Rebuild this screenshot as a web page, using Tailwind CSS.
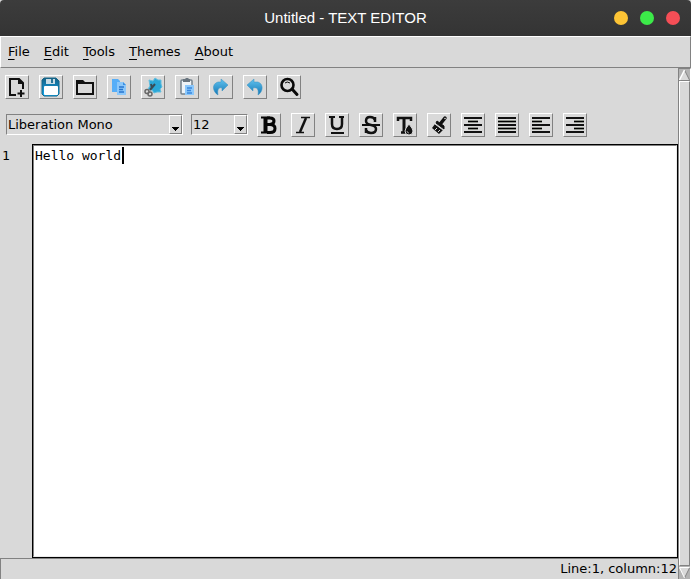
<!DOCTYPE html>
<html lang="en">
<head>
<meta charset="utf-8">
<title>Untitled - TEXT EDITOR</title>
<script src="https://cdn.jsdelivr.net/npm/@tailwindcss/browser@4"></script>
</head>
<body class="h-screen flex flex-col overflow-hidden bg-[#d9d9d9] text-black text-[13px] leading-4 font-['DejaVu_Sans',sans-serif]">
<header class="relative h-9 shrink-0 flex items-center justify-center rounded-t-sm bg-linear-to-b from-[#3c3c3c] to-[#343434]">
  <h1 class="text-white text-[15px] font-['Liberation_Sans',sans-serif]">Untitled - TEXT EDITOR</h1>
  <div class="absolute right-[11px] top-[11px] flex gap-3">
    <button aria-label="Minimize" class="size-3.5 rounded-full bg-[#fdc435]"></button>
    <button aria-label="Maximize" class="size-3.5 rounded-full bg-[#3cea49]"></button>
    <button aria-label="Close" class="size-3.5 rounded-full bg-[#f54e56]"></button>
  </div>
</header>
<nav class="h-8 shrink-0 flex items-center gap-3.5 px-[7px] border border-t-white border-l-white border-r-[#828282] border-b-[#828282]">
  <button><span class="underline underline-offset-3">F</span>ile</button>
  <button><span class="underline underline-offset-3">E</span>dit</button>
  <button><span class="underline underline-offset-3">T</span>ools</button>
  <button><span class="underline underline-offset-3">T</span>hemes</button>
  <button><span class="underline underline-offset-3">A</span>bout</button>
</nav>
<div class="flex-1 min-h-0 flex">
  <main class="flex-1 min-w-0 flex flex-col">
    <div class="flex gap-2.5 pl-[5px] pt-[7px] shrink-0">
      <button aria-label="New" class="size-6 border border-t-white border-l-white border-r-[#828282] border-b-[#828282]">
        <svg width="22" height="22" viewBox="0 0 22 22" fill="none" stroke="#111" stroke-width="2"><path d="M10 19H4V3h9l4 4v6"/><path d="M12 2l6 6h-6z" fill="#111" stroke="none"/><path d="M15 14v7M11.500 17.500h7"/></svg>
      </button>
      <button aria-label="Save" class="size-6 border border-t-white border-l-white border-r-[#828282] border-b-[#828282]">
        <svg width="22" height="22" viewBox="0 0 22 22"><defs><linearGradient id="disk" x2="0" y2="1"><stop stop-color="#166184"/><stop offset="1" stop-color="#11a9f3"/></linearGradient></defs><path d="M4 2h12l3 3v13l-2 2H4l-2-2V4z" fill="url(#disk)" stroke="#176789"/><path d="M6 3h9v5H6z" fill="#c9dce5"/><path d="M11 3h2v4h-2z" fill="#277497"/><rect x="4" y="10" width="14" height="9" rx="1" fill="#fff"/></svg>
      </button>
      <button aria-label="Open" class="size-6 border border-t-white border-l-white border-r-[#828282] border-b-[#828282]">
        <svg width="22" height="22" viewBox="0 0 22 22"><path d="M3 7h16v11H3z" fill="none" stroke="#111" stroke-width="2"/><path d="M2 4h7l2 2v2H2z" fill="#111"/></svg>
      </button>
      <button aria-label="Copy" class="size-6 border border-t-white border-l-white border-r-[#828282] border-b-[#828282]">
        <svg width="22" height="22" viewBox="0 0 22 22"><path d="M4 3h6l2 2v11H4z" fill="#56aef8"/><path d="M9 6h6l3 3v10H9z" fill="#8bc7fa"/><path d="M15 6v3h3z" fill="#3c91e4"/><path d="M11 11h5M11 13.500h4M11 16h5" stroke="#2876ce" stroke-width="1.300"/></svg>
      </button>
      <button aria-label="Cut" class="size-6 border border-t-white border-l-white border-r-[#828282] border-b-[#828282]">
        <svg width="22" height="22" viewBox="0 0 22 22"><path d="M7 4l4 1 2-3 3 2 3 0 0 4 1 3-2 2 1 3-4 0-3 1-2-3-4-1 2-3z" fill="#2ba7d7" stroke="#62bedf"/><path d="M9 8l1 4M13 8l-5 6" stroke="#394c56" stroke-width="2"/><g fill="none" stroke="#686868" stroke-width="1.500"><circle cx="5" cy="15.500" r="2"/><circle cx="8" cy="18" r="2"/></g></svg>
      </button>
      <button aria-label="Paste" class="size-6 border border-t-white border-l-white border-r-[#828282] border-b-[#828282]">
        <svg width="22" height="22" viewBox="0 0 22 22"><rect x="5" y="4" width="11" height="14" rx="1" fill="#eef3f7" stroke="#74818c" stroke-width="1.500"/><path d="M7 3h2l1-1h2l1 1h1v3H7z" fill="#68747e"/><path d="M9 9h9v10H9z" fill="#8bc8fc"/><path d="M11 12h5M11 14.500h4M11 17h5" stroke="#3a86dc" stroke-width="1.300"/></svg>
      </button>
      <button aria-label="Redo" class="size-6 border border-t-white border-l-white border-r-[#828282] border-b-[#828282]">
        <svg width="22" height="22" viewBox="0 0 22 22"><defs><linearGradient id="arrow" x2="0" y2="1"><stop stop-color="#62c3ef"/><stop offset="1" stop-color="#1377b5"/></linearGradient></defs><path d="M11 3l7 6-6 6v-3c-3-1-5 1-4 7-5-3-7-11 0-13 1 0 2 0 3 0z" fill="url(#arrow)" stroke="#3690c0" stroke-width=".5"/></svg>
      </button>
      <button aria-label="Undo" class="size-6 border border-t-white border-l-white border-r-[#828282] border-b-[#828282]">
        <svg width="22" height="22" viewBox="0 0 22 22"><path d="M10 3l-7 6 6 6v-3c4-1 6 1 5 7 5-3 6-11 0-13-1 0-3 0-4 0z" fill="url(#arrow)" stroke="#3690c0" stroke-width=".5"/></svg>
      </button>
      <button aria-label="Find" class="size-6 border border-t-white border-l-white border-r-[#828282] border-b-[#828282]">
        <svg width="22" height="22" viewBox="0 0 22 22" fill="none" stroke="#090909"><circle cx="9.500" cy="9" r="6" stroke-width="2.600"/><path d="M7 7q2-2 5 0" stroke-width="1"/><path d="M14 13l5 5.500" stroke-width="3" stroke-linecap="round"/></svg>
      </button>
    </div>
    <div class="flex items-start pl-1.5 pt-3.5 shrink-0">
      <div class="relative w-[177px] h-[21px] mt-px mr-2 border border-t-[#828282] border-l-[#828282] border-r-white border-b-white">
        <select aria-label="Font" class="appearance-none w-full h-[19px] pl-px block"><option>Liberation Mono</option></select>
        <span class="absolute right-0 top-0 w-[13px] h-[19px] border border-t-white border-l-white border-r-[#828282] border-b-[#828282] pointer-events-none"><svg width="11" height="17"><path d="M2 11h7v1H8v1H7v1H6v1H5v-1H4v-1H3v-1H2z"/></svg></span>
      </div>
      <div class="relative w-[57px] h-[21px] mt-px mr-[9px] border border-t-[#828282] border-l-[#828282] border-r-white border-b-white">
        <select aria-label="Font size" class="appearance-none w-full h-[19px] pl-px block"><option>12</option></select>
        <span class="absolute right-0 top-0 w-[13px] h-[19px] border border-t-white border-l-white border-r-[#828282] border-b-[#828282] pointer-events-none"><svg width="11" height="17"><path d="M2 11h7v1H8v1H7v1H6v1H5v-1H4v-1H3v-1H2z"/></svg></span>
      </div>
      <div class="flex gap-2.5">
        <button aria-label="Bold" class="size-6 border border-t-white border-l-white border-r-[#828282] border-b-[#828282]">
          <svg width="22" height="22" viewBox="0 0 22 22" fill="none" stroke="#050505"><path d="M3 3.500h9M3 18.500h9" stroke-width="2"/><path d="M7.500 3v16" stroke-width="4"/><path d="M9 4h3q4 0 4 3t-4 3.500H9M12 10.500q5 0 5 4t-5 4H9" stroke-width="3"/></svg>
        </button>
        <button aria-label="Italic" class="size-6 border border-t-white border-l-white border-r-[#828282] border-b-[#828282]">
          <svg width="22" height="22" viewBox="0 0 22 22" fill="none" stroke="#111"><path d="M9 3.500h9M4 18.500h8" stroke-width="1.500"/><path d="M14 4L8 18" stroke-width="2.500"/></svg>
        </button>
        <button aria-label="Underline" class="size-6 border border-t-white border-l-white border-r-[#828282] border-b-[#828282]">
          <svg width="22" height="22" viewBox="0 0 22 22" fill="none" stroke="#111"><path d="M3 3h6M13 3h5M5 19h13" stroke-width="2"/><path d="M6 3v7q0 5 5 5t5-5V3" stroke-width="2.500"/></svg>
        </button>
        <button aria-label="Strikethrough" class="size-6 border border-t-white border-l-white border-r-[#828282] border-b-[#828282]">
          <svg width="22" height="22" viewBox="0 0 22 22" fill="none" stroke="#111"><path d="M15 8V3M15 6q-1-3-5-3-4 0-4 4 0 3 5 4 5 1 5 4 0 4-5 4-4 0-5-3M6 14v5" stroke-width="2.500"/><path d="M2 11h18" stroke-width="2"/></svg>
        </button>
        <button aria-label="Text color" class="size-6 border border-t-white border-l-white border-r-[#828282] border-b-[#828282]">
          <svg width="22" height="22" viewBox="0 0 22 22" fill="none" stroke="#111"><path d="M4 7V4h13v3M7 18.500h6" stroke-width="2.500"/><path d="M10 4v14" stroke-width="3"/><path d="M15 10q-4 5-4 7a4 4 0 0 0 8 0q0-2-4-7z" fill="#111" stroke="#d9d9d9"/><path d="M13 17q0 2 2 2" stroke="#999"/></svg>
        </button>
        <button aria-label="Highlight" class="size-6 border border-t-white border-l-white border-r-[#828282] border-b-[#828282]">
          <svg width="22" height="22" viewBox="0 0 22 22" fill="none" stroke="#111"><path d="M13 9l4-5" stroke-width="3.500" stroke-linecap="round"/><circle cx="17" cy="4.500" r=".8" fill="#d9d9d9" stroke="none"/><path d="M9 7l7 5v3l-8-6z" fill="#111"/><path d="M7 10l8 6-4 4-7-6z" fill="#111" stroke="none"/><path d="M7 10l8 6" stroke="#d9d9d9"/><path d="M7 16l2-2M10 18l2-2" stroke="#d9d9d9"/></svg>
        </button>
        <button aria-label="Align center" class="size-6 border border-t-white border-l-white border-r-[#828282] border-b-[#828282]">
          <svg width="22" height="22" viewBox="0 0 22 22" stroke="#111" stroke-width="2"><path d="M2 4h18M2 11h18M2 18h18"/><path d="M6 7.500h10M6 14.500h10" stroke="#8d9189" stroke-width="3"/><path d="M6 7.500h10M6 14.500h10" stroke="#000" stroke-width="1"/></svg>
        </button>
        <button aria-label="Justify" class="size-6 border border-t-white border-l-white border-r-[#828282] border-b-[#828282]">
          <svg width="22" height="22" viewBox="0 0 22 22" stroke="#111" stroke-width="2"><path d="M2 4h18M2 11h18M2 18h18"/><path d="M2 7.500h18M2 14.500h18" stroke="#8d9189" stroke-width="3"/><path d="M2 7.500h18M2 14.500h18" stroke="#000" stroke-width="1"/></svg>
        </button>
        <button aria-label="Align left" class="size-6 border border-t-white border-l-white border-r-[#828282] border-b-[#828282]">
          <svg width="22" height="22" viewBox="0 0 22 22" stroke="#111" stroke-width="2"><path d="M2 4h18M2 11h18M2 18h18"/><path d="M2 7.500h10M2 14.500h10" stroke="#8d9189" stroke-width="3"/><path d="M2 7.500h10M2 14.500h10" stroke="#000" stroke-width="1"/></svg>
        </button>
        <button aria-label="Align right" class="size-6 border border-t-white border-l-white border-r-[#828282] border-b-[#828282]">
          <svg width="22" height="22" viewBox="0 0 22 22" stroke="#111" stroke-width="2"><path d="M2 4h18M2 11h18M2 18h18"/><path d="M10 7.500h10M10 14.500h10" stroke="#8d9189" stroke-width="3"/><path d="M10 7.500h10M10 14.500h10" stroke="#000" stroke-width="1"/></svg>
        </button>
      </div>
    </div>
    <div class="flex-1 min-h-0 flex mt-[7px] font-['DejaVu_Sans_Mono',monospace]">
      <div class="w-8 shrink-0 pl-0.5 pt-1">1</div>
      <div class="relative flex-1 border border-black">
        <textarea aria-label="Document" spellcheck="false" class="block w-full h-full resize-none outline-none bg-white border border-t-[#828282] border-l-[#828282] border-r-[#ececec] border-b-[#ececec] pl-px pt-0.5">Hello world</textarea>
        <span class="absolute left-[89px] top-0.5 w-0.5 h-[17px] bg-black"></span>
      </div>
    </div>
    <footer class="h-[21px] shrink-0 text-right pt-0.5 pr-px border-t border-l border-[#828282]">Line:1, column:12</footer>
  </main>
  <div aria-hidden="true" class="w-[13px] shrink-0 flex flex-col bg-[#b3b3b3] border-l border-t border-r border-l-[#828282] border-t-[#828282] border-r-white">
    <svg width="11" height="12" viewBox="0 0 11 12" fill="#d9d9d9"><path d="M5.500 1L0.500 11h10z"/><path d="M10.500 11L5.500 1" stroke="#828282"/><path d="M0 11.500h11" stroke="#828282"/><path d="M5.500 1L0.500 11" stroke="#fff" stroke-width="1.500"/></svg>
    <div class="flex-1 bg-[#d9d9d9] border border-t-white border-l-white border-r-[#828282] border-b-[#828282]"></div>
    <svg width="11" height="13" viewBox="0 0 11 13" fill="#d9d9d9"><path d="M0.500 2h10l-5 10z"/><path d="M10.500 2l-5 10" stroke="#828282"/><path d="M10.500 1.500h-10l5 10.500" stroke="#fff" fill="none"/></svg>
  </div>
</div>
</body>
</html>
